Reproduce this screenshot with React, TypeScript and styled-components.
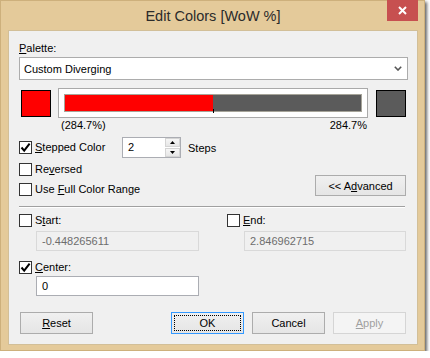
import React from "react";
import styled, { createGlobalStyle } from "styled-components";

const GlobalStyle = createGlobalStyle`
  html, body { margin: 0; padding: 0; background: #ffffff; }
  body {
    font-family: "Liberation Sans", Arial, sans-serif;
    font-size: 11px;
    color: #000;
  }
  * { box-sizing: border-box; }
`;

const Window = styled.div`
  width: 425px;
  height: 351px;
  display: flex;
  flex-direction: column;
  background: #e4ca9a;
  border: 1px solid #cdb07c;
  padding: 0 6px 5px 7px;
  box-shadow: 2px 2px 3px rgba(0, 0, 0, 0.6);
`;

const TitleBar = styled.div`
  height: 29px;
  display: grid;
  grid-template-columns: 1fr auto 1fr;
  align-items: start;
`;

const Title = styled.div`
  grid-column: 2;
  align-self: center;
  font-size: 14.5px;
  color: #2b2b2b;
  padding-top: 1px;
`;

const CloseButton = styled.div`
  grid-column: 3;
  justify-self: end;
  margin-top: -1px;
  width: 31px;
  height: 21px;
  background: #c75050;
  display: flex;
  align-items: center;
  justify-content: center;
`;

const Client = styled.div`
  flex: 1;
  background: #f0f0f0;
  border: 1px solid #d2bf98;
  padding: 11px 9px 0 10px;
  display: flex;
  flex-direction: column;
`;

const FieldLabel = styled.div`
  line-height: 13px;
  height: 13px;
`;

const U = styled.span`
  text-decoration: underline;
`;

const Select = styled.div`
  margin-top: 2px;
  height: 23px;
  background: #fff;
  border: 1px solid #acacac;
  display: flex;
  align-items: center;
  justify-content: space-between;
  padding: 0 5px 0 4px;
`;

const SwatchRow = styled.div`
  margin-top: 8px;
  height: 30px;
  display: flex;
  align-items: center;
  padding-left: 2px;
`;

const Swatch = styled.div<{ $color: string }>`
  width: 30px;
  height: 27px;
  border: 1px solid #000;
  background: ${(p) => p.$color};
`;

const BarFrame = styled.div`
  width: 310px;
  height: 30px;
  margin: 0 8px 0 7px;
  background: #fff;
  border: 1px solid #a9a9a9;
  padding: 5px;
`;

const Bar = styled.div`
  position: relative;
  height: 18px;
  border: 1px solid #a6a499;
  display: flex;
`;

const BarSegment = styled.div<{ $color: string }>`
  flex: 1;
  background: ${(p) => p.$color};
`;

const Tick = styled.div`
  position: absolute;
  left: 50%;
  bottom: -2px;
  width: 1px;
  height: 4px;
  background: #000;
`;

const PercentRow = styled.div`
  margin-top: 1px;
  line-height: 13px;
  display: flex;
  justify-content: space-between;
  padding: 0 41px 0 42px;
`;

const OptionsSection = styled.div`
  margin-top: 5px;
  display: flex;
  justify-content: space-between;
`;

const LeftCol = styled.div`
  display: flex;
  flex-direction: column;
`;

const SteppedRow = styled.div`
  height: 21px;
  display: grid;
  grid-template-columns: 103px 59px auto;
  align-items: center;
`;

const CheckRow = styled.div<{ $top?: number }>`
  height: 20px;
  margin-top: ${(p) => p.$top ?? 0}px;
  display: flex;
  align-items: center;
`;

const CheckLabel = styled.label`
  display: flex;
  align-items: center;
  gap: 3px;
  height: 13px;
  line-height: 13px;
  white-space: nowrap;
`;

const Box = styled.span`
  width: 13px;
  height: 13px;
  border: 1px solid #333;
  background: #fff;
  display: inline-flex;
  align-items: center;
  justify-content: center;
  flex: none;
`;

const Spinner = styled.div`
  width: 59px;
  height: 21px;
  border: 1px solid #abadb3;
  background: #fff;
  display: flex;
`;

const SpinValue = styled.div`
  flex: 1;
  padding-left: 5px;
  line-height: 19px;
`;

const SpinCol = styled.div`
  width: 15px;
  display: flex;
  flex-direction: column;
  gap: 1px;
  padding: 0;
`;

const SpinBtn = styled.div`
  flex: 1;
  border: 1px solid #d4d4d4;
  background: linear-gradient(#f6f6f6, #e6e6e6);
  display: flex;
  align-items: center;
  justify-content: center;
`;

const StepsText = styled.span`
  margin-left: 7px;
`;

const Button = styled.div<{ $variant?: "default" | "focus" | "disabled"; $w?: number }>`
  width: ${(p) => p.$w ?? 73}px;
  height: 22px;
  display: flex;
  align-items: center;
  justify-content: center;
  border: 1px solid
    ${(p) => (p.$variant === "focus" ? "#3399ff" : p.$variant === "disabled" ? "#d5d5d5" : "#acacac")};
  background: ${(p) =>
    p.$variant === "disabled" ? "#f4f4f4" : "linear-gradient(#f0f0f0, #e5e5e5)"};
  color: ${(p) => (p.$variant === "disabled" ? "#a0a0a0" : "#000")};
  outline: ${(p) => (p.$variant === "focus" ? "1px dotted #000" : "none")};
  outline-offset: -4px;
  flex: none;
`;

const AdvancedButton = styled(Button)`
  align-self: flex-end;
  height: 21px;
  margin: 0 2px 3px 0;
`;

const Separator = styled.div`
  margin-top: 7px;
  margin-right: 3px;
  height: 1px;
  background: #a0a0a0;
  box-shadow: 0 1px 0 #fff;
`;

const RangeGrid = styled.div`
  margin-top: 7px;
  display: grid;
  grid-template-columns: 208px 1fr;
`;

const RangeCell = styled.div`
  display: flex;
  flex-direction: column;
`;

const TextBox = styled.div<{ $disabled?: boolean; $w?: number; $top?: number }>`
  margin-top: ${(p) => p.$top ?? 4}px;
  margin-left: 17px;
  width: ${(p) => p.$w ?? 163}px;
  height: 20px;
  line-height: 18px;
  padding-left: 5px;
  border: 1px solid ${(p) => (p.$disabled ? "#d9d9d9" : "#abadb3")};
  background: ${(p) => (p.$disabled ? "#f0f0f0" : "#fff")};
  color: ${(p) => (p.$disabled ? "#6d6d6d" : "#000")};
`;

const CenterBlock = styled.div`
  margin-top: 10px;
  display: flex;
  flex-direction: column;
`;

const ButtonRow = styled.div`
  margin-top: 16px;
  display: flex;
  gap: 8px;
  padding: 0 2px 0 1px;
`;

const Spacer = styled.div`
  flex: 1;
`;

const CheckMark = () => (
  <svg width="11" height="11" viewBox="0 0 11 11">
    <path d="M1.5 5.5 L4.2 8.6 L9.6 1.6" fill="none" stroke="#000" strokeWidth="2" />
  </svg>
);

const Check: React.FC<{ checked?: boolean; children: React.ReactNode }> = ({ checked, children }) => (
  <CheckLabel>
    <Box>{checked ? <CheckMark /> : null}</Box>
    <span>{children}</span>
  </CheckLabel>
);

export default function App() {
  return (
    <>
      <GlobalStyle />
      <Window>
        <TitleBar>
          <Title>Edit Colors [WoW %]</Title>
          <CloseButton>
            <svg width="9" height="9" viewBox="0 0 9 9">
              <path d="M1 1 L8 8 M8 1 L1 8" stroke="#fff" strokeWidth="2" />
            </svg>
          </CloseButton>
        </TitleBar>
        <Client>
          <FieldLabel>
            <U>P</U>alette:
          </FieldLabel>
          <Select>
            <span>Custom Diverging</span>
            <svg width="8" height="5" viewBox="0 0 8 5">
              <path d="M0.8 0.8 L4 4 L7.2 0.8" fill="none" stroke="#555" strokeWidth="1.6" />
            </svg>
          </Select>
          <SwatchRow>
            <Swatch $color="#ff0000" />
            <BarFrame>
              <Bar>
                <BarSegment $color="#ff0000" />
                <BarSegment $color="#5b5b5b" />
                <Tick />
              </Bar>
            </BarFrame>
            <Swatch $color="#5b5b5b" />
          </SwatchRow>
          <PercentRow>
            <span>(284.7%)</span>
            <span>284.7%</span>
          </PercentRow>
          <OptionsSection>
            <LeftCol>
              <SteppedRow>
                <Check checked>
                  <U>S</U>tepped Color
                </Check>
                <Spinner>
                  <SpinValue>2</SpinValue>
                  <SpinCol>
                    <SpinBtn>
                      <svg width="5" height="3" viewBox="0 0 5 3">
                        <path d="M0 3 L2.5 0 L5 3 Z" fill="#000" />
                      </svg>
                    </SpinBtn>
                    <SpinBtn>
                      <svg width="5" height="3" viewBox="0 0 5 3">
                        <path d="M0 0 L2.5 3 L5 0 Z" fill="#000" />
                      </svg>
                    </SpinBtn>
                  </SpinCol>
                </Spinner>
                <StepsText>Steps</StepsText>
              </SteppedRow>
              <CheckRow $top={1}>
                <Check>
                  Re<U>v</U>ersed
                </Check>
              </CheckRow>
              <CheckRow>
                <Check>
                  Use <U>F</U>ull Color Range
                </Check>
              </CheckRow>
            </LeftCol>
            <AdvancedButton $w={91}>
              &lt;&lt; A<U>d</U>vanced
            </AdvancedButton>
          </OptionsSection>
          <Separator />
          <RangeGrid>
            <RangeCell>
              <Check>
                S<U>t</U>art:
              </Check>
              <TextBox $disabled>-0.448265611</TextBox>
            </RangeCell>
            <RangeCell>
              <Check>
                <U>E</U>nd:
              </Check>
              <TextBox $disabled $w={162}>
                2.846962715
              </TextBox>
            </RangeCell>
          </RangeGrid>
          <CenterBlock>
            <Check checked>
              <U>C</U>enter:
            </Check>
            <TextBox $top={2}>0</TextBox>
          </CenterBlock>
          <ButtonRow>
            <Button>
              <U>R</U>eset
            </Button>
            <Spacer />
            <Button $variant="focus">OK</Button>
            <Button>Cancel</Button>
            <Button $variant="disabled">
              <U>A</U>pply
            </Button>
          </ButtonRow>
        </Client>
      </Window>
    </>
  );
}
